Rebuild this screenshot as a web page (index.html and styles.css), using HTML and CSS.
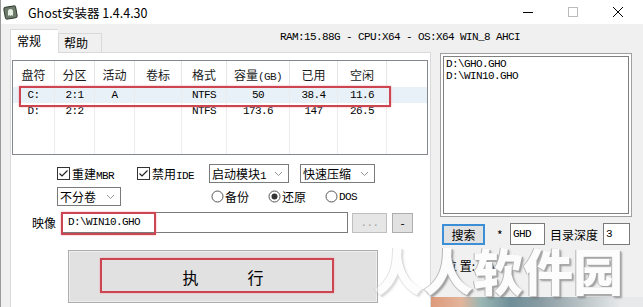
FILE: index.html
```html
<!DOCTYPE html>
<html lang="zh-CN">
<head>
    <meta charset="UTF-8">
    <title>Ghost安装器 1.4.4.30</title>
    <link rel="stylesheet" href="styles.css">
</head>
<body>
<div class="window">
    <div class="titlebar">
        <svg class="app-icon" width="15" height="15" viewBox="0 0 15 15">
            <rect x="1.5" y="1.5" width="12" height="12" rx="2" fill="#6d7b6a" stroke="#2f3a30" transform="rotate(-10 7.5 7.5)"/>
            <path d="M5 11V6.5a2.5 2.5 0 0 1 5 0V11l-1.2-1-1.3 1-1.3-1z" fill="#e8efe4"/>
        </svg>
        <span class="title">Ghost安装器 1.4.4.30</span>
        <div class="win-controls">
            <span class="ctl"><svg width="10" height="10"><path d="M0 5.5h10" stroke="#000"/></svg></span>
            <span class="ctl"><svg width="10" height="10"><rect x="0.5" y="0.5" width="9" height="9" fill="none" stroke="#bbb"/></svg></span>
            <span class="ctl"><svg width="10" height="10"><path d="M0 0l10 10M10 0L0 10" stroke="#000"/></svg></span>
        </div>
    </div>

    <div class="tabbar">
        <div class="tab active">常规</div>
        <div class="tab">帮助</div>
        <div class="sysinfo mono">RAM:15.88G - CPU:X64 - OS:X64 WIN_8 AHCI</div>
    </div>

    <div class="main">
        <div class="page">
            <div class="listview">
                <div class="lv-row lv-head">
                    <span>盘符</span><span>分区</span><span>活动</span><span>卷标</span><span>格式</span><span>容量<i class="mono">(GB)</i></span><span>已用</span><span>空闲</span><span></span>
                </div>
                <div class="lv-row lv-item selected mono">
                    <span>C:</span><span>2:1</span><span>A</span><span></span><span>NTFS</span><span>50</span><span>38.4</span><span>11.6</span><span></span>
                </div>
                <div class="lv-row lv-item mono">
                    <span>D:</span><span>2:2</span><span></span><span></span><span>NTFS</span><span>173.6</span><span>147</span><span>26.5</span><span></span>
                </div>
                <div class="lv-row lv-fill">
                    <span></span><span></span><span></span><span></span><span></span><span></span><span></span><span></span><span></span>
                </div>
            </div>

            <div class="options">
                <div class="opt-grid">
                    <label class="check">
                        <svg width="13" height="13" viewBox="0 0 13 13"><rect x="0.5" y="0.5" width="12" height="12" fill="#fff" stroke="#333"/><path d="M2.5 6.5L5 9l5.5-5.5" fill="none" stroke="#222" stroke-width="1.2"/></svg>
                        <span>重建<span class="mono">MBR</span></span>
                    </label>
                    <label class="check">
                        <svg width="13" height="13" viewBox="0 0 13 13"><rect x="0.5" y="0.5" width="12" height="12" fill="#fff" stroke="#333"/><path d="M2.5 6.5L5 9l5.5-5.5" fill="none" stroke="#222" stroke-width="1.2"/></svg>
                        <span>禁用<span class="mono">IDE</span></span>
                    </label>
                    <div class="select sel-boot"><span>启动模块<span class="mono">1</span></span>
                        <svg width="9" height="6"><path d="M1 1l3.5 3.5L8 1" fill="none" stroke="#999"/></svg>
                    </div>
                    <div class="select sel-zip"><span>快速压缩</span>
                        <svg width="9" height="6"><path d="M1 1l3.5 3.5L8 1" fill="none" stroke="#999"/></svg>
                    </div>

                    <div class="select sel-split"><span>不分卷</span>
                        <svg width="9" height="6"><path d="M1 1l3.5 3.5L8 1" fill="none" stroke="#999"/></svg>
                    </div>
                    <div class="radios">
                        <label class="radio">
                            <svg width="13" height="13"><circle cx="6.5" cy="6.5" r="5.5" fill="#fff" stroke="#555"/></svg><span>备份</span>
                        </label>
                        <label class="radio">
                            <svg width="13" height="13"><circle cx="6.5" cy="6.5" r="5.5" fill="#fff" stroke="#555"/><circle cx="6.5" cy="6.5" r="3" fill="#333"/></svg><span>还原</span>
                        </label>
                        <label class="radio">
                            <svg width="13" height="13"><circle cx="6.5" cy="6.5" r="5.5" fill="#fff" stroke="#555"/></svg><span class="mono">DOS</span>
                        </label>
                    </div>
                </div>

                <div class="image-row">
                    <span class="image-label">映像</span>
                    <div class="textbox image-path mono">D:\WIN10.GHO</div>
                    <div class="btn btn-browse mono">...</div>
                    <div class="btn btn-minus">-</div>
                </div>

                <div class="run-btn">
                    <span>执</span><span>行</span>
                </div>
            </div>
        </div>

        <div class="side">
            <div class="filebox mono">
                <div>D:\GHO.GHO</div>
                <div>D:\WIN10.GHO</div>
            </div>
            <div class="search-row">
                <div class="btn btn-search">搜索</div>
                <span class="star">*</span>
                <div class="textbox small mono">GHD</div>
                <span class="depth-label">目录深度</span>
                <div class="textbox tiny mono">3</div>
            </div>
            <div class="location">位 置: <span class="mono">D:\</span></div>
        </div>
    </div>

    <div class="desk-strip"></div>
    <div class="watermark"><span class="faded">人</span>人软件园</div>
</div>
</body>
</html>
```

FILE: styles.css
```css
body {
    margin: 0;
    width: 643px;
    height: 307px;
    overflow: hidden;
    background: #f0f0f0;
    font-family: "Noto Sans CJK SC", "Liberation Sans", sans-serif;
    font-size: 12px;
    color: #000;
}
.mono {
    font-family: "Liberation Mono", "DejaVu Sans Mono", monospace;
    font-size: 11px;
    letter-spacing: -0.6px;
    font-style: normal;
}
.window {
    position: relative;
    height: 307px;
    border-left: 1px solid #9a9a9a;
    box-sizing: border-box;
}

/* title bar */
.titlebar {
    height: 24px;
    background: #ffffff;
    display: flex;
    align-items: center;
}
.app-icon {
    margin-left: 2px;
}
.title {
    margin-left: 10px;
    font-size: 12.5px;
}
.win-controls {
    margin-left: auto;
    margin-right: 3px;
    display: flex;
}
.ctl {
    width: 45px;
    height: 24px;
    display: flex;
    align-items: center;
    justify-content: center;
}

/* tabs */
.tabbar {
    height: 28px;
    display: flex;
    align-items: flex-end;
    padding-left: 9px;
    position: relative;
    z-index: 1;
}
.tab {
    height: 19px;
    width: 44px;
    box-sizing: border-box;
    border: 1px solid #d9d9d9;
    border-bottom: none;
    background: #f0f0f0;
    padding-left: 5px;
    line-height: 18px;
}
.tab.active {
    width: 48px;
    height: 24px;
    margin-bottom: -1px;
    background: #ffffff;
    padding-left: 6px;
    line-height: 22px;
    border-right: none;
}
.sysinfo {
    align-self: flex-start;
    margin-top: 7px;
    margin-left: 178px;
}

.main {
    display: flex;
}
.page {
    width: 421px;
    height: 270px;
    box-sizing: border-box;
    margin-left: 9px;
    background: #ffffff;
    border: 1px solid #d9d9d9;
}

/* list view */
.listview {
    margin: 7px 2px 0 1px;
    height: 95px;
    box-sizing: border-box;
    border: 1px solid #828790;
    display: flex;
    flex-direction: column;
}
.lv-row {
    display: grid;
    grid-template-columns: 42px 40px 40px 47px 45px 63px 48px 49px 1fr;
}
.lv-row span {
    border-right: 1px solid #ececec;
    text-align: center;
    white-space: nowrap;
}
.lv-row span:last-child {
    border-right: none;
}
.lv-head {
    height: 26px;
    line-height: 28px;
    color: #1a1a1a;
}
.lv-head span {
    border-right-color: #e5e5e5;
}
.lv-item {
    height: 16px;
    line-height: 16px;
}
.lv-item.selected {
    background: #e9f1f8;
    position: relative;
}
.lv-item.selected::after {
    content: "";
    position: absolute;
    left: 6px;
    top: -1px;
    width: 368px;
    height: 17px;
    border: 2px solid #cc4550;
    box-shadow: 0 0 2px #f3a7ad;
}
.lv-fill {
    flex: 1;
}

/* options */
.options {
    padding-left: 46px;
    padding-top: 9px;
}
.opt-grid {
    display: grid;
    grid-template-columns: 80px 72px 91px 75px;
    grid-template-rows: 19px 19px;
    row-gap: 4px;
    align-items: center;
}
.check, .radio {
    display: flex;
    align-items: center;
    gap: 2px;
}
.select {
    height: 19px;
    box-sizing: border-box;
    border: 1px solid #7a7a7a;
    background: #ffffff;
    padding: 0 5px 0 2px;
    display: flex;
    align-items: center;
}
.select svg {
    margin-left: auto;
}
.sel-boot {
    width: 80px;
}
.sel-zip {
    width: 75px;
}
.sel-split {
    width: 64px;
}
.radios {
    grid-column: 3 / 5;
    display: flex;
    gap: 19px;
    padding-left: 2px;
}
.radio {
    gap: 1px;
}

.image-row {
    display: flex;
    align-items: center;
    height: 21px;
    margin: 6px 0 0 -25px;
}
.image-label {
    width: 29px;
}
.textbox {
    height: 21px;
    box-sizing: border-box;
    border: 1px solid #7a7a7a;
    background: #ffffff;
    padding-left: 6px;
    line-height: 19px;
}
.image-path {
    width: 287px;
    position: relative;
}
.image-path::after {
    content: "";
    position: absolute;
    left: -1px;
    top: -1px;
    width: 91px;
    height: 19px;
    border: 2px solid #cc4550;
    box-shadow: 0 0 2px #f3a7ad;
}
.btn {
    height: 20px;
    box-sizing: border-box;
    border: 1px solid #adadad;
    background: #e1e1e1;
    text-align: center;
    line-height: 18px;
}
.btn-browse {
    width: 35px;
    margin-left: 4px;
    color: #a0a0a0;
    border-color: #bfbfbf;
    background: #e6e6e6;
}
.btn-minus {
    width: 21px;
    margin-left: 5px;
}

.run-btn {
    margin: 17px 0 0 11px;
    width: 310px;
    height: 53px;
    box-sizing: border-box;
    border: 1px solid #adadad;
    background: #e1e1e1;
    box-shadow: inset 0 0 0 1px #eeeeee;
    display: flex;
    justify-content: center;
    align-items: center;
    gap: 49px;
    font-size: 16px;
    position: relative;
}
.run-btn::after {
    content: "";
    position: absolute;
    left: 31px;
    top: 7px;
    width: 230px;
    height: 31px;
    border: 2px solid #cc4550;
    box-shadow: 0 0 2px #f3a7ad;
}

/* right side */
.side {
    margin-left: 9px;
    width: 192px;
    padding-top: 1px;
}
.filebox {
    height: 164px;
    box-sizing: border-box;
    border: 1px solid #a0a0a0;
    box-shadow: inset 0 0 0 2px #ffffff, inset 0 0 0 3px #808080;
    background: #ffffff;
    padding: 4px 5px;
    line-height: 12px;
}
.search-row {
    display: flex;
    align-items: center;
    margin-top: 6px;
    height: 22px;
}
.btn-search {
    width: 43px;
    height: 21px;
    margin-left: 2px;
    border: 2px solid #3c8fd6;
    line-height: 17px;
}
.star {
    margin-left: 12px;
    width: 7px;
}
.textbox.small {
    width: 35px;
    height: 22px;
    margin-left: 6px;
    padding-left: 2px;
    line-height: 20px;
}
.depth-label {
    margin-left: 5px;
}
.textbox.tiny {
    width: 27px;
    height: 22px;
    margin-left: 5px;
    padding-left: 2px;
    line-height: 20px;
}
.location {
    margin: 12px 0 0 5px;
}

/* overlays */
.desk-strip {
    position: absolute;
    left: 430px;
    right: 0;
    bottom: 0;
    height: 10px;
    background: linear-gradient(90deg, #dd9a7b 0, #e3b49a 30px, #9ab6b4 50px, #6f8e98 80px, #8a9ca3 110px, #b9c3c6 150px, #e7e9ea 190px);
}
.watermark {
    position: absolute;
    left: 372px;
    top: 244px;
    font-size: 50px;
    font-weight: 900;
    line-height: 50px;
    color: rgba(255, 255, 255, 0.96);
    text-shadow: -1px 0 0 #b5b5b5, 1px 1px 0 #a8a8a8, 2px 2px 2px rgba(90, 90, 90, 0.6);
    white-space: nowrap;
}
.faded {
    opacity: 0.4;
}
```
